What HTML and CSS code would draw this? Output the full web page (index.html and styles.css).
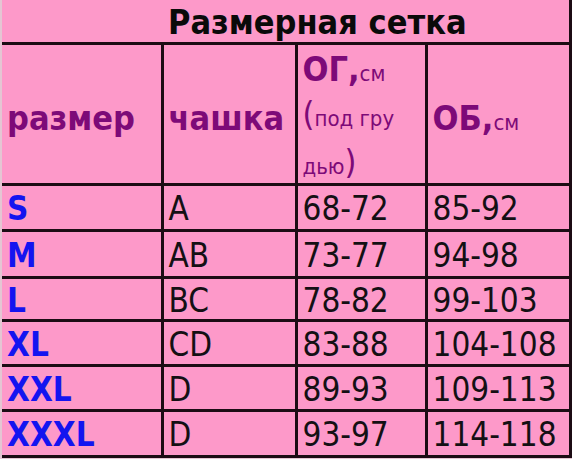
FILE: index.html
```html
<!DOCTYPE html>
<html lang="ru">
<head>
<meta charset="utf-8">
<title>Размерная сетка</title>
<link rel="stylesheet" href="styles.css">
</head>
<body>
<table class="grid">
  <colgroup>
    <col class="c1"><col class="c2"><col class="c3"><col class="c4">
  </colgroup>
  <tr class="title-row">
    <td colspan="4" class="title">Размерная сетка</td>
  </tr>
  <tr class="head-row">
    <td class="head">размер</td>
    <td class="head">чашка</td>
    <td class="head og">
      <span class="line first"><b>ОГ,</b><span class="unit">см</span></span>
      <span class="line"><span class="paren">(</span><span class="small">под гру</span></span>
      <span class="line"><span class="small">дью</span><span class="paren">)</span></span>
    </td>
    <td class="head"><b>ОБ,</b><span class="unit">см</span></td>
  </tr>
  <tr class="row r1"><td class="size">S</td><td>A</td><td>68-72</td><td>85-92</td></tr>
  <tr class="row r2"><td class="size">M</td><td>AB</td><td>73-77</td><td>94-98</td></tr>
  <tr class="row r3"><td class="size">L</td><td>BC</td><td>78-82</td><td>99-103</td></tr>
  <tr class="row r4"><td class="size">XL</td><td>CD</td><td>83-88</td><td>104-108</td></tr>
  <tr class="row r5"><td class="size">XXL</td><td>D</td><td>89-93</td><td>109-113</td></tr>
  <tr class="row r6"><td class="size">XXXL</td><td>D</td><td>93-97</td><td>114-118</td></tr>
</table>
</body>
</html>
```

FILE: styles.css
```css
html, body {
  margin: 0;
  padding: 0;
  background: #e4c6d3;
}
body {
  padding-left: 2px;
  font-family: "DejaVu Sans Condensed", "DejaVu Sans", sans-serif;
  font-stretch: condensed;
}
.grid {
  border-collapse: collapse;
  width: 568px;
  background: #fd99c9;
  color: #141014;
  table-layout: fixed;
}
.c1 { width: 160px; }
.c2 { width: 134px; }
.c3 { width: 130px; }
.c4 { width: 144px; }
.grid td {
  border: 3px solid #1c0c14;
  padding: 3px 0 0 5px;
  font-size: 33px;
  line-height: 1;
  vertical-align: middle;
  white-space: nowrap;
}
.grid tr td:first-child { border-left: none; }
.title-row td { border-top: none; }
.title-row { height: 43px; }
.grid .title {
  text-align: left;
  padding: 2px 0 0 166px;
  font-weight: bold;
  font-size: 34px;
  color: #0a0a0a;
}
.head-row { height: 139px; }
.grid .head {
  font-weight: bold;
  font-size: 34px;
  color: #7d0a78;
  padding-top: 8px;
}
.head b { font-weight: bold; }
.grid .og {
  font-weight: normal;
  padding-top: 0;
  vertical-align: top;
}
.line {
  display: block;
  height: 46px;
  line-height: 46px;
}
.line.first {
  height: 43px;
  line-height: 43px;
  padding-top: 3px;
}
.line:last-child {
  line-height: 50px;
}
.og b { font-weight: bold; font-size: 34px; }
.unit {
  font-weight: normal;
  font-size: 22px;
}
.small { font-size: 22px; font-weight: normal; }
.paren { font-weight: normal; font-size: 34px; }
.r1 { height: 46px; }
.r2 { height: 47px; }
.r3 { height: 43px; }
.r4 { height: 45px; }
.r5 { height: 45px; }
.r6 { height: 46px; }
.size {
  font-weight: bold;
  color: #1414f0;
}
```
